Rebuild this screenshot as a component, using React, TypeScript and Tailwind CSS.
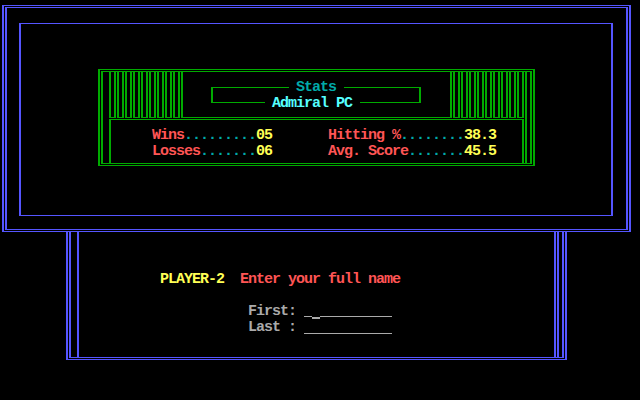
import React from 'react';

const GreenBars = ({ side }: { side: 'left' | 'right' }) => (
    <div className="flex h-full">
        {Array.from({ length: 9 }).map((_, i) => (
            <div
                key={i}
                className={side === 'left'
                    ? 'mr-px h-full w-[7px] border-x-2 border-b border-[#00aa00]'
                    : 'ml-px h-full w-[7px] border-x-2 border-b border-[#00aa00]'}
            />
        ))}
    </div>
);

const Stat = ({ label, dots, value }: { label: string; dots: string; value: string }) => (
    <span className="whitespace-pre">
        <span className="text-[#ff5555]">{label}</span>
        <span className="text-[#00aaaa]">{dots}</span>
        <span className="text-[#ffff55]">{value}</span>
    </span>
);

const App = () => {
    return (
        <div className="h-[400px] w-[640px] overflow-hidden bg-black pt-[5px] font-['Liberation_Mono',monospace] text-[15px] leading-4 font-bold tracking-[-1px]">
            {/* top panel */}
            <div className="ml-[2px] h-[227px] w-[629px] border-x-2 border-y border-[#5555ff] p-px">
                <div className="h-full border-x-2 border-y border-[#5555ff] pl-[12px] pt-[15px]">
                    <div className="h-[193px] w-[594px] border-x-2 border-y border-[#5555ff] pl-[77px] pt-[45px]">
                        {/* stats card */}
                        <div className="h-[97px] w-[437px] border-x-2 border-y border-[#00aa00] p-px">
                            <div className="flex h-full border-x-2 border-y border-[#00aa00] pl-[6px] pr-[3px]">
                                <div className="flex w-[415px] flex-col">
                                    <div className="flex h-[46px]">
                                        <GreenBars side="left" />
                                        <div className="h-full w-[271px] border-x-2 border-b border-[#00aa00] pl-[28px] pt-[15px]">
                                            <div className="flex h-[16px] w-[210px] flex-col items-start border-x-2 border-y border-[#00aa00]">
                                                <div className="-mt-[8px] ml-[76px] bg-black pl-[7px] pr-[8px] text-[#00aaaa]">Stats</div>
                                                <div className="ml-[52px] whitespace-pre bg-black pl-[7px] pr-[8px] text-[#55ffff]">Admiral PC</div>
                                            </div>
                                        </div>
                                        <GreenBars side="right" />
                                    </div>
                                    <div className="mt-px h-[44px] border-x-2 border-t border-[#00aa00] pl-[41px] pt-[8px]">
                                        <div className="flex">
                                            <div className="w-[176px]"><Stat label="Wins" dots="........." value="05" /></div>
                                            <Stat label="Hitting %" dots="........" value="38.3" />
                                        </div>
                                        <div className="flex">
                                            <div className="w-[176px]"><Stat label="Losses" dots="......." value="06" /></div>
                                            <Stat label="Avg. Score" dots="......." value="45.5" />
                                        </div>
                                    </div>
                                </div>
                                <div className="ml-px h-full w-[2px] bg-[#00aa00]" />
                            </div>
                        </div>
                    </div>
                </div>
            </div>

            {/* name entry panel */}
            <div className="ml-[66px] h-[128px] w-[501px] border-x-2 border-b border-[#5555ff] px-px pb-px">
                <div className="flex h-full border-x-2 border-b border-[#5555ff] pl-[6px] pr-[3px]">
                    <div className="h-full w-[479px] border-x-2 border-[#5555ff] pl-[81px] pt-[40px]">
                        <div className="whitespace-pre">
                            <span className="text-[#ffff55]">PLAYER-2</span>
                            <span>  </span>
                            <span className="text-[#ff5555]">Enter your full name</span>
                        </div>
                        <div className="mt-[16px] flex pl-[88px] text-[#aaaaaa]">
                            <span className="whitespace-pre">First: </span>
                            <div className="flex h-[16px] items-start">
                                <div className="h-[13px] w-[8px] border-b border-[#aaaaaa]" />
                                <div className="h-[15px] w-[8px] border-b-2 border-[#aaaaaa]" />
                                <div className="h-[13px] w-[72px] border-b border-[#aaaaaa]" />
                            </div>
                        </div>
                        <div className="flex pl-[88px] text-[#aaaaaa]">
                            <span className="whitespace-pre">Last : </span>
                            <div className="h-[14px] w-[88px] border-b border-[#aaaaaa]" />
                        </div>
                    </div>
                    <div className="ml-px h-full w-[2px] bg-[#5555ff]" />
                </div>
            </div>
        </div>
    );
};

export default App;
